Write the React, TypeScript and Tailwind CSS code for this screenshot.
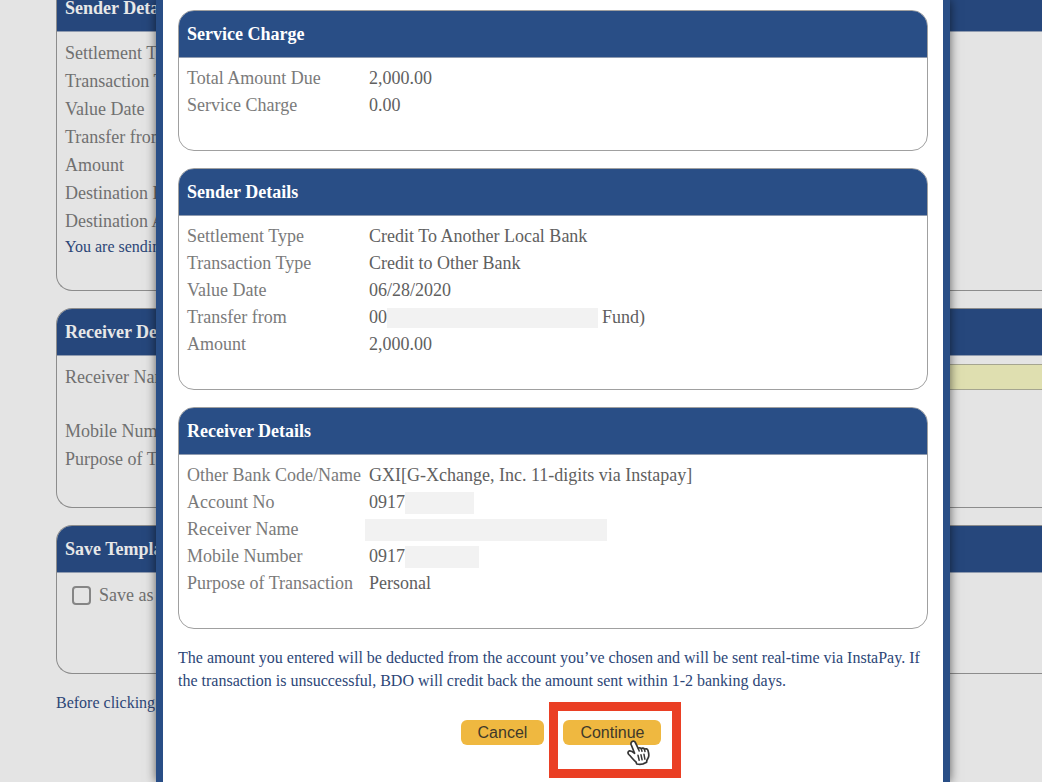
import type { ReactNode } from "react";

type Row = { label: string; value: ReactNode };

function Mask({ className }: { className: string }) {
  return <span aria-hidden="true" className={`block bg-[#f2f2f2] ${className}`} />;
}

function DetailCard({ title, rows }: { title: string; rows: Row[] }) {
  return (
    <section className="overflow-hidden rounded-2xl border border-[#a0a0a0] bg-white">
      <h2 className="border-b border-[#8f9bb0] bg-[#294e86] px-2 leading-[46px] font-bold text-white">
        {title}
      </h2>
      <dl className="px-2 pt-[7px] pb-[31px]">
        {rows.map((row) => (
          <div key={row.label} className="grid grid-cols-[182px_1fr] leading-[27px]">
            <dt className="whitespace-nowrap text-[#7a7a7a]">{row.label}</dt>
            <dd className="flex items-center text-[#606060]">{row.value}</dd>
          </div>
        ))}
      </dl>
    </section>
  );
}

function PageCard({ title, children }: { title: string; children: ReactNode }) {
  return (
    <section className="overflow-hidden rounded-l-2xl border border-r-0 border-[#8c8c8c]">
      <h2 className="border-b border-[#8f9bb0] bg-[#26477c] px-2 leading-[46px] font-bold text-[#e8e8e8]">
        {title}
      </h2>
      {children}
    </section>
  );
}

const pageSenderLabels = [
  "Settlement Type",
  "Transaction Type",
  "Value Date",
  "Transfer from",
  "Amount",
  "Destination Bank",
  "Destination Account",
];

const serviceRows: Row[] = [
  { label: "Total Amount Due", value: "2,000.00" },
  { label: "Service Charge", value: "0.00" },
];

const senderRows: Row[] = [
  { label: "Settlement Type", value: "Credit To Another Local Bank" },
  { label: "Transaction Type", value: "Credit to Other Bank" },
  { label: "Value Date", value: "06/28/2020" },
  {
    label: "Transfer from",
    value: (
      <>
        00
        <Mask className="mr-1 h-5 w-[211px]" />
        Fund)
      </>
    ),
  },
  { label: "Amount", value: "2,000.00" },
];

const receiverRows: Row[] = [
  { label: "Other Bank Code/Name", value: "GXI[G-Xchange, Inc. 11-digits via Instapay]" },
  {
    label: "Account No",
    value: (
      <>
        0917
        <Mask className="h-[22px] w-[69px]" />
      </>
    ),
  },
  { label: "Receiver Name", value: <Mask className="-ml-1 h-[22px] w-[242px]" /> },
  {
    label: "Mobile Number",
    value: (
      <>
        0917
        <Mask className="h-[22px] w-[74px]" />
      </>
    ),
  },
  { label: "Purpose of Transaction", value: "Personal" },
];

function HandCursor() {
  return (
    <svg
      aria-hidden="true"
      viewBox="0 0 24 26"
      className="pointer-events-none absolute top-5 left-16 h-[26px] w-6"
    >
      <path
        d="M5.200 1.500C6.400.8 7.700 1.300 8.300 2.500L11.300 8.600C11.900 7.400 13.800 7.500 14.300 8.700C15.200 7.600 17 7.900 17.500 9.300C18.500 8.300 20.500 8.700 21 10.400C21.800 13 22.200 15.200 21.500 17.200L19.800 20.500L19.600 22.300C16.500 24.200 12.500 24.800 9.700 24L9 22C6.700 20.300 4.500 17.200 1.800 14.500C.4 13 1 11.200 2.500 10.900C4.200 10.600 5.600 11.600 7.600 13.300L4.200 4.700C3.700 3.300 4.200 2.100 5.200 1.500Z"
        fill="#fff"
        stroke="#353535"
        strokeWidth="1.700"
        strokeLinejoin="round"
      />
      <path
        d="M11.300 8.600L12.200 11M14.300 8.900L15 11.200M17.500 9.500L18 11.500M11 15.300L12.200 20.300M14 14.800L15.100 19.800M17 14.300L17.900 19.200"
        fill="none"
        stroke="#353535"
        strokeWidth="1.500"
        strokeLinecap="round"
      />
    </svg>
  );
}

export default function App() {
  return (
    <div className="relative min-h-screen overflow-hidden bg-[#e4e4e4] font-['Liberation_Serif',serif] text-[18px]">
      <main className="-mt-4 flex flex-col gap-[17px] pl-14">
        <PageCard title="Sender Details">
          <ul className="px-2 pt-[7px] text-[#707070]">
            {pageSenderLabels.map((label) => (
              <li key={label} className="leading-7">
                {label}
              </li>
            ))}
          </ul>
          <p className="px-2 pb-8 text-[16px] leading-[23px] text-[#2c4677]">You are sending</p>
        </PageCard>

        <PageCard title="Receiver Details">
          <div className="flex items-start pt-2 pl-2">
            <label htmlFor="receiver" className="w-[800px] leading-[26px] text-[#707070]">
              Receiver Name
            </label>
            <input
              id="receiver"
              className="h-[26px] min-w-0 flex-1 border border-r-0 border-[#a5a590] bg-[#dfdfb0] px-1"
            />
          </div>
          <ul className="px-2 pt-[27px] pb-[34px] text-[#707070]">
            <li className="leading-7">Mobile Number</li>
            <li className="leading-7">Purpose of Transaction</li>
          </ul>
        </PageCard>

        <PageCard title="Save Template">
          <label className="flex items-center gap-2 px-[15px] pt-2 pb-16 leading-7 text-[#707070]">
            <input
              type="checkbox"
              className="size-[19px] appearance-none rounded border-2 border-[#858585]"
            />
            Save as
          </label>
        </PageCard>

        <p className="text-[16px] leading-[23px] text-[#2c4677]">Before clicking</p>
      </main>

      <div
        role="dialog"
        aria-label="Transfer confirmation"
        className="absolute inset-y-0 right-[92px] left-[156px] flex flex-col gap-[17px] overflow-hidden border-x-[7px] border-[#294e86] bg-white px-[15px] pt-[10px] shadow-[0_0_10px_rgba(0,0,0,0.6)]"
      >
        <DetailCard title="Service Charge" rows={serviceRows} />
        <DetailCard title="Sender Details" rows={senderRows} />
        <DetailCard title="Receiver Details" rows={receiverRows} />

        <p className="text-[16px] leading-[23px] text-[#2c4677]">
          The amount you entered will be deducted from the account you’ve chosen and will be sent
          real-time via InstaPay. If the transaction is unsuccessful, BDO will credit back the
          amount sent within 1-2 banking days.
        </p>

        <div className="flex justify-center gap-[19px] pt-[11px] pl-4 font-['Liberation_Sans',sans-serif] text-[16px] text-[#40392a]">
          <button type="button" className="h-[25px] rounded-md bg-[#efb840] px-[17px]">
            Cancel
          </button>
          <div className="relative">
            <button type="button" className="h-[25px] rounded-md bg-[#efb840] px-[17px]">
              Continue
            </button>
            <span
              aria-hidden="true"
              className="pointer-events-none absolute -top-[18px] -left-[14px] h-[76px] w-[132px] border-9 border-[#ea3f24]"
            />
            <HandCursor />
          </div>
        </div>
      </div>
    </div>
  );
}
